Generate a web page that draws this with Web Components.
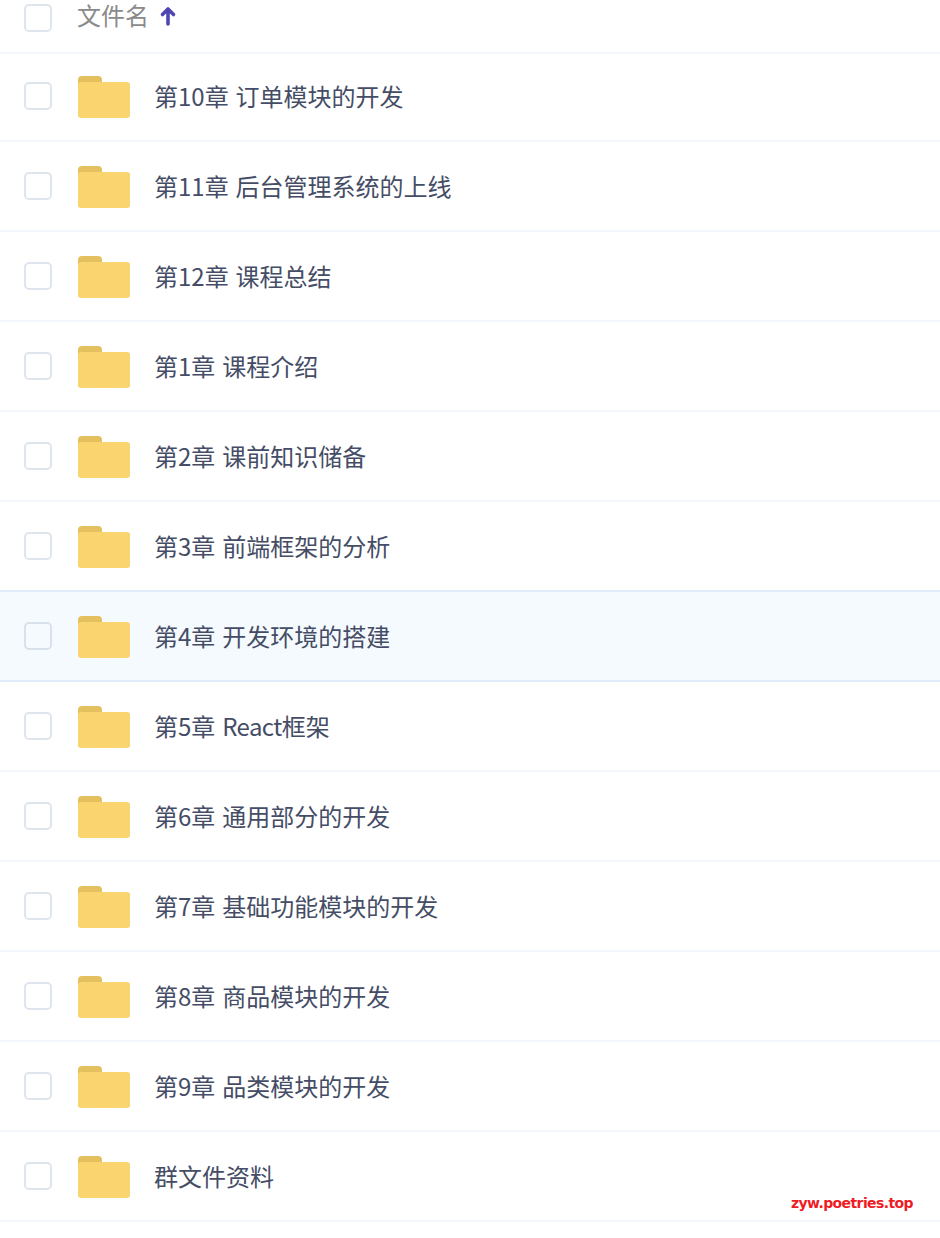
<!DOCTYPE html>
<html lang="zh">
<head>
<meta charset="utf-8">
<title>文件列表</title>
<style>
  html, body { margin: 0; background: #fff; }
  body { font-family: "Noto Sans CJK SC", "Noto Sans", sans-serif; position: relative; height: 1238px; overflow: hidden; }
</style>
</head>
<body>
<file-list>
  <list-header slot="header">文件名</list-header>
  <file-row>第10章 订单模块的开发</file-row>
  <file-row>第11章 后台管理系统的上线</file-row>
  <file-row>第12章 课程总结</file-row>
  <file-row>第1章 课程介绍</file-row>
  <file-row>第2章 课前知识储备</file-row>
  <file-row>第3章 前端框架的分析</file-row>
  <file-row active>第4章 开发环境的搭建</file-row>
  <file-row>第5章 <span style="letter-spacing:-.6px">React</span>框架</file-row>
  <file-row>第6章 通用部分的开发</file-row>
  <file-row>第7章 基础功能模块的开发</file-row>
  <file-row>第8章 商品模块的开发</file-row>
  <file-row>第9章 品类模块的开发</file-row>
  <file-row>群文件资料</file-row>
</file-list>
<water-mark>zyw.poetries.top</water-mark>

<script>
class CheckBox extends HTMLElement {
  connectedCallback() {
    this.attachShadow({ mode: 'open' }).innerHTML = `
      <style>
        :host {
          display: block;
          box-sizing: border-box;
          width: 28px;
          height: 28px;
          border: 2px solid var(--check-border, #dfe5ed);
          border-radius: 5px;
          flex: none;
        }
      </style>`;
  }
}

class FolderIcon extends HTMLElement {
  connectedCallback() {
    this.attachShadow({ mode: 'open' }).innerHTML = `
      <style>
        :host { display: block; width: 52px; height: 42px; flex: none; }
        svg { display: block; filter: blur(.4px); }
      </style>
      <svg width="52" height="42" viewBox="0 0 52 42">
        <path d="M0 4a4 4 0 0 1 4-4h16a4 4 0 0 1 4 4v4H0z" fill="#e5c05f"/>
        <path d="M0 9a3 3 0 0 1 3-3h46a3 3 0 0 1 3 3v30a3 3 0 0 1-3 3H3a3 3 0 0 1-3-3z" fill="#fad56f"/>
      </svg>`;
  }
}

class ListHeader extends HTMLElement {
  connectedCallback() {
    this.attachShadow({ mode: 'open' }).innerHTML = `
      <style>
        :host {
          display: flex;
          align-items: center;
          box-sizing: border-box;
          height: 52px;
          padding: 4px 0 20px 24px;
          box-shadow: 0 2px 0 #f3f6fb;
          color: #8a8a8a;
          font-family: "Liberation Sans", "Noto Sans CJK SC", sans-serif;
          font-size: 24px;
          position: relative;
          z-index: 1;
        }
        check-box { margin-right: 25px; }
        slot { display: block; line-height: 24px; margin-bottom: 3px; }
        svg { margin: 0 0 4px 10px; display: block; }
      </style>
      <check-box></check-box>
      <slot></slot>
      <svg width="18" height="20" viewBox="0 0 18 20">
        <path d="M9 18V3M3.5 8.5 9 3l5.5 5.5" fill="none" stroke="#4f46b0" stroke-width="3.6" stroke-linecap="round" stroke-linejoin="round"/>
      </svg>`;
  }
}

class FileRow extends HTMLElement {
  connectedCallback() {
    this.attachShadow({ mode: 'open' }).innerHTML = `
      <style>
        :host {
          display: flex;
          align-items: center;
          box-sizing: border-box;
          height: 90px;
          padding-left: 24px;
          border-bottom: 2px solid #f3f6fb;
          color: #454d66;
          font-size: 24px;
          word-spacing: 1.5px;
        }
        :host([active]) {
          --check-border: #d8e1ec;
          background: #f5faff;
          border-bottom-color: #e1ecfb;
          box-shadow: 0 -2px 0 #e1ecfb;
        }
        check-box { margin-right: 26px; }
        folder-icon { margin-right: 24px; margin-top: 2px; }
        slot { display: block; margin-bottom: 2px; }
      </style>
      <check-box></check-box>
      <folder-icon></folder-icon>
      <slot></slot>`;
  }
}

class FileList extends HTMLElement {
  connectedCallback() {
    this.attachShadow({ mode: 'open' }).innerHTML = `
      <style>
        :host { display: flex; flex-direction: column; width: 940px; }
      </style>
      <slot name="header"></slot>
      <slot></slot>`;
  }
}

class WaterMark extends HTMLElement {
  connectedCallback() {
    this.attachShadow({ mode: 'open' }).innerHTML = `
      <style>
        :host {
          position: absolute;
          right: 27px;
          top: 1193px;
          color: #ee1c25;
          font: 700 14px/20px "DejaVu Sans", sans-serif;
          letter-spacing: -.6px;
        }
      </style>
      <slot></slot>`;
  }
}

customElements.define('check-box', CheckBox);
customElements.define('folder-icon', FolderIcon);
customElements.define('list-header', ListHeader);
customElements.define('file-row', FileRow);
customElements.define('file-list', FileList);
customElements.define('water-mark', WaterMark);
</script>
</body>
</html>
